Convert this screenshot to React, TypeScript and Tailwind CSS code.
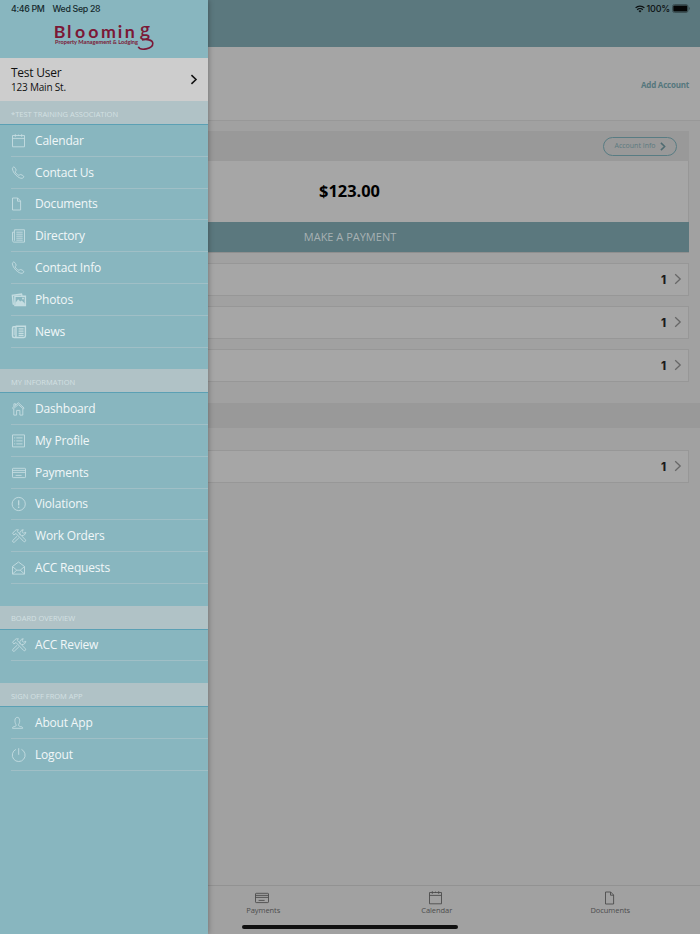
import type { ReactNode } from "react";

type IconName =
  | "calendar"
  | "phone"
  | "document"
  | "directory"
  | "photos"
  | "news"
  | "home"
  | "list"
  | "card"
  | "alert"
  | "tools"
  | "mail"
  | "user"
  | "power";

type MenuItem = { label: string; icon: IconName };
type MenuSection = { title: string; items: MenuItem[] };

const sections: MenuSection[] = [
  {
    title: "*TEST TRAINING ASSOCIATION",
    items: [
      { label: "Calendar", icon: "calendar" },
      { label: "Contact Us", icon: "phone" },
      { label: "Documents", icon: "document" },
      { label: "Directory", icon: "directory" },
      { label: "Contact Info", icon: "phone" },
      { label: "Photos", icon: "photos" },
      { label: "News", icon: "news" },
    ],
  },
  {
    title: "MY INFORMATION",
    items: [
      { label: "Dashboard", icon: "home" },
      { label: "My Profile", icon: "list" },
      { label: "Payments", icon: "card" },
      { label: "Violations", icon: "alert" },
      { label: "Work Orders", icon: "tools" },
      { label: "ACC Requests", icon: "mail" },
    ],
  },
  {
    title: "BOARD OVERVIEW",
    items: [{ label: "ACC Review", icon: "tools" }],
  },
  {
    title: "SIGN OFF FROM APP",
    items: [
      { label: "About App", icon: "user" },
      { label: "Logout", icon: "power" },
    ],
  },
];

const tabs: (MenuItem & { nudge: string })[] = [
  { label: "Payments", icon: "card", nudge: "-ml-0.5" },
  { label: "Calendar", icon: "calendar", nudge: "-ml-0.5" },
  { label: "Documents", icon: "document", nudge: "ml-[3px]" },
];

const icons: Record<IconName, ReactNode> = {
  calendar: (
    <path d="M1.5 2.5h12v11.3h-12zM1.5 5.4h12M4.3 1.2v2.6M10.7 1.2v2.6M7.5 1.6v1.4" />
  ),
  phone: (
    <path d="M1.4 3.2c.5-1 1.4-1.6 2-1 .8.8 1.6 2.1 1.8 2.9.1.7-1.1 1-1 1.7.4 1.4 2 3 3.6 3.5.8.2 1.1-1 1.9-.8 1 .3 2.2 1 2.9 1.7.6.7-.4 1.9-1.6 2.1-3 .5-9.6-5.2-9.6-10.1z" />
  ),
  document: <path d="M1.5 2h5.2l2.9 3v9H1.5zM6.5 2v3.2h3.1" />,
  directory: (
    <path d="M3.4 1.8h10.1v12.3H3.2c-1 0-1.7-.5-1.7-1.4V4.2h1.9M3.4 1.8v11M5.3 4.2h6.4M5.3 6.2h6.4M5.3 8.2h6.4M5.3 10.2h6.4M5.3 12.2h6.4" />
  ),
  photos: (
    <>
      <path d="M3.2 12.2 2.2 12 1.4 3.4 10.5 2.1 11 3.7" strokeWidth="1.4" />
      <path d="M3.9 4.2h10.5v9.3H3.9z" strokeWidth="1.4" />
      <path
        d="M4.5 13v-2.2l2.7-3.6 2 2.4 1.6-1.2 3 3V13z"
        fill="currentColor"
        stroke="none"
      />
      <circle cx="12" cy="6.4" r="1" fill="currentColor" stroke="none" />
    </>
  ),
  news: (
    <>
      <path
        d="M4.6 2.3h9.8v9.8q0 1.4-1.4 1.4H3.1q-1.6 0-1.6-1.5V4q0-1.2 1.2-1.2H5v9.4q0 1.1-1 1.1"
        strokeWidth="1.4"
      />
      <path d="M7.6 4.8h5M7.6 7.1h5M7.6 9.3h5M7.6 11.3h5" strokeWidth="1.2" />
      <path d="M3.2 4.4v7" />
    </>
  ),
  home: (
    <path d="M1.4 7 7.3 1.7 13.1 7l-.8.9-5-4.4-5 4.4zM2.8 7.8v6.3h2.8V9.4h3.3v4.7h2.9V7.8M2.9 5.5V2.8h1.7v1.3" />
  ),
  list: (
    <>
      <path d="M1.5 1.9h12v12h-12zM5.3 4.9h6.2M5.3 7.9h6.2M5.3 10.9h6.2" />
      <path d="M3.2 4.9h1M3.2 7.9h1M3.2 10.9h1" strokeWidth="1" />
    </>
  ),
  card: (
    <path d="M2.2 3.3h11.6q.7 0 .7.7v7.9q0 .7-.7.7H2.2q-.7 0-.7-.7V4q0-.7.7-.7zM1.5 5.4h13M1.5 7.4h13M4.6 10.4h6" />
  ),
  alert: (
    <>
      <circle cx="7.7" cy="8" r="6.6" />
      <path d="M7.7 4.2v5.3M7.7 10.6v1.3" strokeWidth="1.2" />
    </>
  ),
  tools: (
    <path d="M1.6 5.2 4.3 2.4c.7-.7 2-.8 3.1-.5-1 .6-1.2 1.2-.8 1.9l7.8 8c.8 1.2-.6 2.5-1.7 1.7L5.2 5.7l-1 .2-1.3 1zM9.3 7.3 8.8 6c-.2-2 1-3.9 3.4-4.3l-1.1 2.1 1.5 1.5 2.2-1c-.2 2.3-2.2 3.5-3.9 3.2M6.2 8.2l-4.4 4.2c-.8 1.1.5 2.4 1.6 1.7l4.5-4.3" />
  ),
  mail: (
    <path d="M1.5 6.5 7.5 2l6 4.5v7.6h-12zM1.5 6.6l4.3 3.6h3.4l4.3-3.6M1.7 13.8l4.1-3.6M13.3 13.8l-4.1-3.6" />
  ),
  user: (
    <path d="M4.9 9.4C3.6 7.5 3.2 2.4 6.3 2.4s2.7 5.1 1.4 7c-.5 1.4.3 1.9 2 2.2 1.5.2 2 .7 2 1.7H1.5c0-1 .4-1.5 1.7-1.7 1.8-.3 2.3-.8 1.7-2.2" />
  ),
  power: <path d="M4.9 2.4a6.4 6.4 0 1 0 5.6 0M7.7 1.2v6.6" />,
};

function Icon({ name }: { name: IconName }) {
  return (
    <svg
      viewBox="0 0 16 16"
      className="size-4 shrink-0"
      fill="none"
      stroke="currentColor"
      strokeWidth="0.9"
    >
      {icons[name]}
    </svg>
  );
}

function Chevron({ className }: { className: string }) {
  return (
    <svg
      viewBox="0 0 8 12"
      className={className}
      fill="none"
      stroke="currentColor"
    >
      <path d="M1.2 1.2 6.2 6l-5 4.8" />
    </svg>
  );
}

function Logo() {
  return (
    <svg
      viewBox="0 0 104 30"
      className="mt-[21px] ml-[53px] h-[30px] w-[104px] overflow-visible text-[#7b1836]"
      fill="currentColor"
    >
      <text
        x="0.7 14 22 35.2 48 64.8 71.8"
        y="14.6"
        fontSize="17.8"
        fontWeight="700"
        fontFamily="Lato, sans-serif"
      >
        Bloomin
        <tspan
          x="87"
          y="13.2"
          fontSize="18"
          fontWeight="600"
          fontFamily="Open Sans, sans-serif"
        >
          g
        </tspan>
      </text>
      <text
        x="2"
        y="20.6"
        textLength="83"
        lengthAdjust="spacingAndGlyphs"
        fontSize="5.8"
        fontWeight="700"
        fontFamily="Lato, sans-serif"
      >
        Property Management &amp; Lodging
      </text>
      <path
        d="M89 16.9c4-.7 10.6-.5 10.8 3.4.2 5.9-12.8 7.8-14.5 3.4"
        fill="none"
        stroke="currentColor"
        strokeWidth="1.6"
      />
    </svg>
  );
}

function Drawer() {
  return (
    <aside className="absolute inset-y-0 left-0 w-[208px] bg-[#88b6bf] shadow-[0_0_6px_rgba(0,0,0,0.35)]">
      <div className="flex h-[58px] flex-col">
        <div className="flex h-0 gap-2 pt-[2px] pl-[11px] font-[Inter,sans-serif] text-[8.8px] leading-[14px] font-medium tracking-[-0.32px] whitespace-nowrap text-[#15292d]">
          <span>4:46 PM</span>
          <span>Wed Sep 28</span>
        </div>
        <Logo />
      </div>

      <div className="flex h-[43px] items-center justify-between bg-[#cdcdcd] pr-[10px] pl-[11px] text-[#111]">
        <div>
          <p className="text-[12px] leading-[15px] tracking-[-0.25px]">
            Test User
          </p>
          <p className="text-[10px] leading-[15px] tracking-[-0.2px]">
            123 Main St.
          </p>
        </div>
        <Chevron className="h-[11px] w-2 stroke-[1.7]" />
      </div>

      {sections.map((section) => (
        <section key={section.title} className="mb-[21.6px]">
          <h2 className="flex h-6 items-center border-b border-[#5ba0b4] bg-[#b0c2c6] pt-1 pl-[11px] text-[7.5px] text-[#d3e0e2]">
            {section.title}
          </h2>
          <ul>
            {section.items.map((item) => (
              <li key={item.label} className="h-[31.8px] pl-[11px]">
                <a className="flex h-full items-center gap-2 border-b border-[#a0bfc6] pt-px text-[12px] tracking-[-0.18px] text-[#f1f7f8]">
                  <span className="text-[#c5dde1]">
                    <Icon name={item.icon} />
                  </span>
                  {item.label}
                </a>
              </li>
            ))}
          </ul>
        </section>
      ))}
    </aside>
  );
}

function CountRow({ count }: { count: number }) {
  return (
    <div className="mx-[11px] flex h-[33px] items-center justify-end gap-2 border border-[#979797] bg-[#a6a6a6] pr-[6px]">
      <span className="pt-[2px] font-[Inter,sans-serif] text-[11.5px] font-extrabold text-[#1c1c1c]">
        {count}
      </span>
      <Chevron className="mb-px h-3 w-2 stroke-[1.3] text-[#676767]" />
    </div>
  );
}

export default function App() {
  return (
    <div className="relative flex h-[934px] w-[700px] flex-col overflow-hidden bg-[#a1a1a1] font-['Open_Sans',sans-serif]">
      <header className="flex h-[47px] items-start justify-end bg-[#5b787e] pt-[2px] pr-[10px]">
        <div className="flex items-center gap-[2px] font-[Inter,sans-serif] text-[9px] leading-[13px] font-medium tracking-[-0.2px] text-[#0c1112]">
          <svg
            viewBox="0 0 10 8"
            className="h-2 w-[10px]"
            fill="none"
            stroke="currentColor"
            strokeWidth="1.3"
          >
            <path d="M.6 2.9a6.2 6.2 0 0 1 8.8 0M2.2 4.8a4 4 0 0 1 5.6 0" />
            <path
              d="M3.5 6 5 7.6 6.5 6a2 2 0 0 0-3 0z"
              fill="currentColor"
              stroke="none"
            />
          </svg>
          <span>100%</span>
          <svg viewBox="0 0 18 9" className="h-[9px] w-[18px]">
            <rect x=".5" y=".5" width="15.5" height="8" rx="2" fill="none" stroke="#3c5054" />
            <rect x="1.3" y="1.4" width="14" height="6.2" rx="1" fill="#050606" />
            <path d="M16.9 3v3q1-.4 1-1.5t-1-1.5" fill="#3c5054" />
          </svg>
        </div>
      </header>

      <div className="flex h-[74px] items-center justify-end border-b border-[#989898] bg-[#a5a5a5] pt-[2px] pr-[11px] text-[8px] font-bold tracking-[-0.22px] text-[#55777d]">
        Add Account
      </div>

      <div className="mx-[11px] mt-[10px] border-b border-[#8f8f8f]">
        <div className="flex h-[30px] items-center justify-end bg-[#999] pr-3">
          <button className="flex h-[19px] w-[74px] items-center justify-center gap-1 rounded-full border border-[#587c83] text-[7px] text-[#5c7a80]">
            Account Info
            <Chevron className="h-[9px] w-[6px] stroke-[2] text-[#4f6b71]" />
          </button>
        </div>
        <div className="flex h-[61px] items-center justify-center border-r border-[#979797] bg-[#a6a6a6] text-[16.4px] font-bold text-black">
          $123.00
        </div>
        <button className="h-[30px] w-full bg-[#5b787e] text-[11px] text-[#a7b1b3]">
          MAKE A PAYMENT
        </button>
      </div>

      <div className="mt-[10px] flex flex-col gap-[10px]">
        <CountRow count={1} />
        <CountRow count={1} />
        <CountRow count={1} />
      </div>

      <div className="mt-[21px] mb-[22px] h-[25px] bg-[#999]" />
      <CountRow count={1} />

      <nav className="mt-auto flex h-[49px] border-t border-[#929292] px-[3px] pt-1">
        <div className="flex-1" />
        {tabs.map((tab) => (
          <a
            key={tab.label}
            className="flex flex-1 flex-col items-center text-[7.5px] leading-[9px] tracking-[-0.05px] text-[#4d4d4d]"
          >
            <span className={tab.nudge}>
              <Icon name={tab.icon} />
            </span>
            {tab.label}
          </a>
        ))}
      </nav>

      <Drawer />
      <div className="absolute bottom-[5px] left-[242px] h-1 w-[216px] rounded-full bg-[#111]" />
    </div>
  );
}
